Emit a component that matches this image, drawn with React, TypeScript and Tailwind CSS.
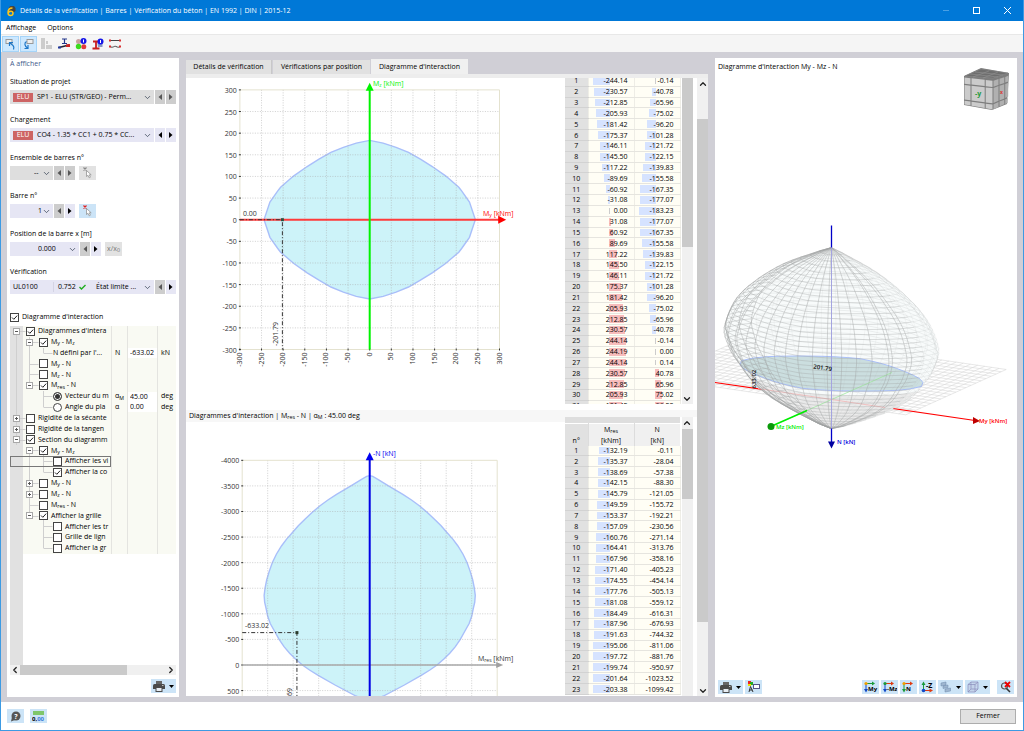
import React from 'react'
import { ChevronDown, ChevronLeft, ChevronRight, ChevronUp } from 'lucide-react'

const momentRows: [number, number][] = [
  [-244.14, -0.14], [-230.57, -40.78], [-212.85, -65.96], [-205.93, -75.02],
  [-181.42, -96.2], [-175.37, -101.28], [-146.11, -121.72], [-145.5, -122.15],
  [-117.22, -139.83], [-89.69, -155.58], [-60.92, -167.35], [-31.08, -177.07],
  [0, -183.23], [31.08, -177.07], [60.92, -167.35], [89.69, -155.58],
  [117.22, -139.83], [145.5, -122.15], [146.11, -121.72], [175.37, -101.28],
  [181.42, -96.2], [205.93, -75.02], [212.85, -65.96], [230.57, -40.78],
  [244.14, -0.14], [244.19, 0], [244.14, 0.14], [230.57, 40.78],
  [212.85, 65.96], [205.93, 75.02], [181.42, 96.2],
]

const axialRows: [number, number][] = [
  [-132.19, -0.11], [-135.37, -28.04], [-138.69, -57.38], [-142.15, -88.3],
  [-145.79, -121.05], [-149.59, -155.72], [-153.37, -192.21], [-157.09, -230.56],
  [-160.76, -271.14], [-164.41, -313.76], [-167.96, -358.16], [-171.4, -405.23],
  [-174.55, -454.14], [-177.76, -505.13], [-181.08, -559.12], [-184.49, -616.31],
  [-187.96, -676.93], [-191.63, -744.32], [-195.06, -811.06], [-197.72, -881.76],
  [-199.74, -950.97], [-201.64, -1023.52], [-203.38, -1099.42],
]

// right half of the Mres - N envelope, from the compression tip downwards
const envelope: [number, number][] = [
  [0, -3700], [6, -3685], [16, -3629], [36, -3505], [65, -3335], [82, -3225], [98, -3107],
  [113, -2980], [127, -2847], [140, -2720], [151, -2593], [163, -2460], [173, -2326],
  [183, -2165], [191, -2000], [197, -1830], [202, -1661], [205, -1510], [207, -1362],
  [206, -1230], [203, -1099], [200, -951], [195, -811], [184, -616], [178, -505],
  [168, -358], [157, -231], [146, -121], [132, 0], [118, 98], [101, 202], [68, 391],
  [27, 606], [0, 710],
]

const fullEnvelope = [...envelope, ...envelope.slice(1, -1).reverse().map(([m, n]) => [-m, n])]

const lowerHalf = momentRows.slice(0, 25)
const section = [...lowerHalf, ...lowerHalf.map(([a, b]) => [-a, -b])]

const M = ({ s }: { s: string }) => (
  <>M<sub>{s}</sub></>
)

const Chevron = ({ className = '' }) => (
  <ChevronDown size={9} strokeWidth={2} className={`pointer-events-none text-gray-700 ${className}`} />
)

const Stepper = ({ dir, off = false }: { dir: 'left' | 'right'; off?: boolean }) => (
  <button
    aria-label={dir === 'left' ? 'Précédent' : 'Suivant'}
    className={`w-[10px] h-[14px] shrink-0 flex items-center justify-center ${off ? 'bg-[#cdcdcd] text-[#555]' : 'bg-[#e6e6f4] text-black'}`}
  >
    <svg width="4" height="6" viewBox="0 0 4 6" fill="currentColor">
      {dir === 'left' ? <path d="M4 0 .5 3 4 6z" /> : <path d="M0 0 3.500 3 0 6z" />}
    </svg>
  </button>
)

const Check = ({ checked = false, label }: { checked?: boolean; label: string }) => (
  <span className="relative w-[9px] h-[9px] shrink-0">
    <input type="checkbox" aria-label={label} defaultChecked={checked} className="peer appearance-none block w-[9px] h-[9px] border border-[#444] bg-white" />
    <svg viewBox="0 0 9 9" className="hidden peer-checked:block absolute inset-0 pointer-events-none" fill="none" stroke="#222" strokeWidth="1">
      <path d="M2 4.5 3.8 6.3 7.2 2.6" />
    </svg>
  </span>
)

const Field = ({ id, label, children }: { id: string; label: string; children: React.ReactNode }) => (
  <div className="mb-[11px]">
    <label htmlFor={id} className="block leading-[10px] mb-[3px]">{label}</label>
    <div className="flex h-[14px] gap-px">{children}</div>
  </div>
)

const PickIcon = ({ color }: { color: string }) => (
  <svg width="12" height="12" viewBox="0 0 12 12" fill="none">
    <path d="M1.5 .5 4.5 3.500M4.5 .5 1.5 3.500" stroke={color} strokeWidth="1.200" />
    <path d="M4.5 3.500v6l1.500-1.200 1.200 2.500 1.200-.6-1.100-2.400h1.900z" fill="#fff" stroke="#888" strokeWidth=".7" />
  </svg>
)

const ElsBadge = () => (
  <span className="w-5 h-[9px] shrink-0 bg-[#cd6464] text-white flex items-center justify-center">ELU</span>
)

/* ---------- left panel ---------- */

type Node = {
  depth: number
  name: React.ReactNode
  label: string
  kind?: 'check' | 'radio' | 'text'
  on?: boolean
  open?: '+' | '-'
  symbol?: React.ReactNode
  value?: string
  unit?: string
  focus?: boolean
}

const tree: Node[] = [
  { depth: 0, name: "Diagrammes d'intera", label: "Diagrammes d'interaction", on: true, open: '-' },
  { depth: 1, name: <><M s="y" /> - <M s="z" /></>, label: 'My - Mz', on: true, open: '-' },
  { depth: 2, name: "N défini par l'...", label: 'N défini', kind: 'text', symbol: 'N', value: '-633.02', unit: 'kN' },
  { depth: 1, name: <><M s="y" /> - N</>, label: 'My - N' },
  { depth: 1, name: <><M s="z" /> - N</>, label: 'Mz - N' },
  { depth: 1, name: <><M s="res" /> - N</>, label: 'Mres - N', on: true, open: '-' },
  { depth: 2, name: 'Vecteur du m', label: 'Vecteur du moment', kind: 'radio', on: true, symbol: <>α<sub>M</sub></>, value: '45.00', unit: 'deg' },
  { depth: 2, name: 'Angle du pla', label: 'Angle du plan', kind: 'radio', symbol: 'α', value: '0.00', unit: 'deg' },
  { depth: 0, name: 'Rigidité de la sécante', label: 'Rigidité de la sécante', open: '+' },
  { depth: 0, name: 'Rigidité de la tangen', label: 'Rigidité de la tangente', open: '+' },
  { depth: 0, name: 'Section du diagramm', label: 'Section du diagramme', on: true, open: '-' },
  { depth: 1, name: <><M s="y" /> - <M s="z" /></>, label: 'Section My - Mz', on: true, open: '-' },
  { depth: 2, name: 'Afficher les vi', label: 'Afficher les valeurs', focus: true },
  { depth: 2, name: 'Afficher la co', label: 'Afficher la courbe', on: true },
  { depth: 1, name: <><M s="y" /> - N</>, label: 'Section My - N', open: '+' },
  { depth: 1, name: <><M s="z" /> - N</>, label: 'Section Mz - N', open: '+' },
  { depth: 1, name: <><M s="res" /> - N</>, label: 'Section Mres - N' },
  { depth: 1, name: 'Afficher la grille', label: 'Afficher la grille', on: true, open: '-' },
  { depth: 2, name: 'Afficher les tr', label: 'Afficher les traits' },
  { depth: 2, name: 'Grille de lign', label: 'Grille de lignes' },
  { depth: 2, name: 'Afficher la gr', label: 'Afficher la graduation' },
]

const indent = ['pl-0', 'pl-[13px]', 'pl-[27px]']

const Tree = () => (
  <div className="relative grid auto-rows-fr h-[228px]">
    <svg viewBox="0 0 165 228" className="absolute left-0 top-0 w-[165px] h-[228px]" stroke="#cfcfcf" fill="none">
      <path d="M6.5 5V119M19.5 11V59M19.5 124V189M33.5 22V27M33.5 65V81M33.5 129V146M33.5 190V222" />
      {tree.map((n, i) => (
        <path key={i} d={`M${[6.5, 19.5, 33.5][n.depth]} ${Math.round(i * 10.86) + 5.5}h9`} />
      ))}
    </svg>
    {tree.map((n, i) => (
      <div key={i} className="relative grid grid-cols-[101px_16px_30px_18px] min-h-0">
        <div className={`flex items-center overflow-hidden whitespace-nowrap ${indent[n.depth]} ${n.focus ? 'outline outline-[#777] -outline-offset-1' : ''}`}>
          <span className="w-[13px] shrink-0 flex justify-center">
            {n.open && (
              <button aria-label={n.label} className="block">
                <svg width="7" height="7" viewBox="0 0 7 7" className="block">
                  <rect x=".5" y=".5" width="6" height="6" fill="#fff" stroke="#a8a8a8" />
                  <path d={n.open === '+' ? 'M2 3.500h3M3.500 2v3' : 'M2 3.500h3'} stroke="#555" />
                </svg>
              </button>
            )}
          </span>
          {n.kind === 'radio' ? (
            <input type="radio" name="plan" aria-label={n.label} defaultChecked={n.on} className="appearance-none w-[9px] h-[9px] ml-[3px] shrink-0 rounded-full border border-[#444] bg-white checked:bg-[#333] checked:shadow-[inset_0_0_0_1px_#fff]" />
          ) : n.kind !== 'text' ? (
            <span className="ml-[3px] flex"><Check checked={n.on} label={n.label} /></span>
          ) : null}
          <span className="ml-[3px]">{n.name}</span>
        </div>
        <div className="border-l border-[#e4e4e0] flex items-center pl-[3px] whitespace-nowrap">
          <span>{n.symbol}</span>
        </div>
        <div className="border-l border-[#e4e4e0] flex items-center min-w-0">
          {n.value && <input aria-label={n.label} defaultValue={n.value} className="w-full min-w-0 bg-white pl-[2px] leading-[10px]" />}
        </div>
        <div className="border-l border-[#e4e4e0] flex items-center pl-[3px]">{n.unit}</div>
      </div>
    ))}
  </div>
)

const PrintButton = () => (
  <button aria-label="Imprimer" className="w-[25px] h-[14px] bg-[#cce4f7] flex items-center justify-center gap-1">
    <svg width="12" height="11" viewBox="0 0 12 11">
      <path d="M3 0h6v3H3z" fill="#666" />
      <path d="M1.500 3h9Q12 3 12 4.500V8H0V4.500Q0 3 1.500 3z" fill="#4a4a4a" />
      <path d="M2.500 6h7v5h-7z" fill="#4a4a4a" />
      <path d="M3.500 7h5v3h-5z" fill="#e8eef4" />
      <path d="M9 4.500h1.500" stroke="#ddd" strokeWidth=".8" />
    </svg>
    <Caret />
  </button>
)

const Caret = () => (
  <svg width="5" height="3" viewBox="0 0 5 3"><path d="M0 0h5L2.500 3z" /></svg>
)

const LeftPanel = () => (
  <aside className="w-[172px] shrink-0 bg-white px-[3px] flex flex-col">
    <h2 className="text-[#3f5b8c] leading-[12px] mb-[7px]">À afficher</h2>

    <Field id="situation" label="Situation de projet">
      <div className="relative flex-1 flex items-center bg-[#dedede] pl-[3px] min-w-0">
        <ElsBadge />
        <select id="situation" className="appearance-none flex-1 min-w-0 pl-1">
          <option>SP1 - ELU (STR/GEO) - Perm...</option>
        </select>
        <Chevron className="absolute right-[2px]" />
      </div>
      <Stepper dir="left" off />
      <Stepper dir="right" off />
    </Field>

    <Field id="chargement" label="Chargement">
      <div className="relative flex-1 flex items-center bg-[#e6e6f4] pl-[3px] min-w-0">
        <ElsBadge />
        <select id="chargement" className="appearance-none flex-1 min-w-0 pl-1">
          <option>CO4 - 1.35 * CC1 + 0.75 * CC...</option>
        </select>
        <Chevron className="absolute right-[2px]" />
      </div>
      <Stepper dir="left" />
      <Stepper dir="right" />
    </Field>

    <Field id="ensemble" label="Ensemble de barres n°">
      <div className="relative w-[43px] flex items-center bg-[#dedede]">
        <select id="ensemble" className="appearance-none w-full h-full pl-6"><option>--</option></select>
        <Chevron className="absolute right-[2px]" />
      </div>
      <Stepper dir="left" off />
      <Stepper dir="right" off />
      <button aria-label="Sélectionner un ensemble" className="ml-[3px] w-[17px] bg-[#e2e2e2] flex items-center justify-center"><PickIcon color="#888" /></button>
    </Field>

    <Field id="barre" label="Barre n°">
      <div className="relative w-[43px] flex items-center bg-[#e6e6f4]">
        <select id="barre" className="appearance-none w-full h-full pl-7"><option>1</option></select>
        <Chevron className="absolute right-[2px]" />
      </div>
      <Stepper dir="left" off />
      <Stepper dir="right" />
      <button aria-label="Sélectionner une barre" className="ml-[3px] w-[17px] bg-[#cce4f7] flex items-center justify-center"><PickIcon color="#e02020" /></button>
    </Field>

    <Field id="position" label="Position de la barre x [m]">
      <div className="relative w-[69px] flex items-center bg-[#e6e6f4]">
        <select id="position" className="appearance-none w-full h-full pl-7"><option>0.000</option></select>
        <Chevron className="absolute right-[2px]" />
      </div>
      <Stepper dir="left" off />
      <Stepper dir="right" />
      <button className="ml-[3px] w-[17px] bg-[#e2e2e2] text-[#777] flex items-center justify-center"><span>x/x<sub>0</sub></span></button>
    </Field>

    <Field id="verification" label="Vérification">
      <div className="relative flex-1 flex items-center bg-[#e6e6f4] pl-[3px] min-w-0">
        <span className="w-[40px] shrink-0">UL0100</span>
        <span className="w-[43px] shrink-0 border-l border-[#d4d4e4] pl-1 flex items-center gap-[3px]">
          0.752
          <svg width="7" height="6" viewBox="0 0 7 6" fill="none" stroke="#1fae1f" strokeWidth="1.4"><path d="M.5 3 2.5 5 6.5 1" /></svg>
        </span>
        <select id="verification" className="appearance-none flex-1 min-w-0">
          <option>État limite ...</option>
        </select>
        <Chevron className="absolute right-[2px]" />
      </div>
      <Stepper dir="left" off />
      <Stepper dir="right" />
    </Field>

    <div className="mt-[7px] flex items-center gap-[3px] h-[11px] mb-[3px]">
      <Check checked label="Diagramme d'interaction" />
      Diagramme d'interaction
    </div>

    <div className="flex-1 bg-[linear-gradient(90deg,#e1e1e1_13px,#fff_13px)]">
      <div className="bg-[linear-gradient(90deg,#e1e1e1_13px,#f9faf3_13px)]">
        <Tree />
      </div>
    </div>

    <div className="flex h-[10px] items-center bg-[#f0f0f0] text-[#222]">
      <ChevronLeft size={10} strokeWidth={3} />
      <div className="w-[107px] h-full bg-[#cacaca]" />
      <ChevronRight size={10} strokeWidth={3} className="ml-auto" />
    </div>
    <div className="flex justify-end py-1">
      <PrintButton />
    </div>
  </aside>
)

/* ---------- charts ---------- */

const dashDot = '4 2 1 2'

const MomentChart = () => {
  const k = 0.4327
  const x = (v: number) => 183.7 + v * k
  const y = (v: number) => 141.7 - v * k
  const ticks = Array.from({ length: 13 }, (_, i) => i * 50 - 300)
  return (
    <svg width="376" height="332" viewBox="0 0 376 332" className="text-[7px]" fill="#333">
      <polygon points={section.map(([a, b]) => `${x(a)},${y(b)}`).join(' ')} fill="#cdf3f9" stroke="#a9bffa" strokeWidth="1.4" />
      {ticks.map(t => (
        <g key={t}>
          <path d={`M${x(t)} ${y(300)}V${y(-300)}M${x(-300)} ${y(t)}H${x(300)}`} stroke={Math.abs(t) === 300 ? '#e4e2cf' : '#aaa'} strokeOpacity={Math.abs(t) === 300 ? 1 : 0.55} strokeDasharray={Math.abs(t) === 300 ? undefined : '1 1.5'} strokeWidth="1" />
          <path d={`M${x(-300) - 1} ${y(t)}h2M${x(t)} ${y(-300) - 1}v2`} stroke="#333" strokeWidth="1" />
          <text x={x(-300) - 3} y={y(t) + 3} textAnchor="end">{t}</text>
          <text transform={`translate(${x(t) + 2} ${y(-300) + 3}) rotate(-90)`} textAnchor="end">{t}</text>
        </g>
      ))}
      <path d={`M${x(-300)} ${y(0)}H${x(305)}`} stroke="#ff3b3b" strokeWidth="2" />
      <path d={`M${x(297)} ${y(0) - 4}l8 4-8 4z`} fill="#f00" />
      <path d={`M${x(0)} ${y(-300)}V${y(305)}`} stroke="#00f400" strokeWidth="2" />
      <path d={`M${x(0) - 4} ${y(298)}l4-8 4 8z`} fill="#00f400" />
      <path d={`M${x(-300)} ${y(0)}H${x(-201.79)}V${y(-300)}`} fill="none" stroke="#333" strokeDasharray={dashDot} />
      <rect x={x(-201.79) - 1.5} y={y(0) - 1.5} width="3" height="3" fill="#2b5040" />
      <text x="57" y="138">0.00</text>
      <text transform="translate(92 268) rotate(-90)">-201.79</text>
      <text x="187" y="8" fill="#00f400">M<tspan fontSize="5" dy="1">z</tspan><tspan dy="-1"> [kNm]</tspan></text>
      <text x="297" y="138" fill="#f00">M<tspan fontSize="5" dy="1">y</tspan><tspan dy="-1"> [kNm]</tspan></text>
    </svg>
  )
}

const AxialChart = () => {
  const x = (v: number) => 183.7 + v * 0.51
  const y = (v: number) => 243 + v * 0.05117
  const cols = Array.from({ length: 11 }, (_, i) => i * 50 - 250)
  const rows = Array.from({ length: 10 }, (_, i) => i * 500 - 4000)
  return (
    <svg width="376" height="274" viewBox="0 0 376 274" className="text-[7px]" fill="#333">
      <polygon points={fullEnvelope.map(([m, n]) => `${x(m)},${y(n)}`).join(' ')} fill="#cdf3f9" stroke="#a9bffa" strokeWidth="1.4" />
      {cols.map(t => (
        <path key={t} d={`M${x(t)} ${y(-4000)}V274`} stroke={Math.abs(t) === 250 ? '#e4e2cf' : '#aaa'} strokeOpacity={Math.abs(t) === 250 ? 1 : 0.55} strokeDasharray={Math.abs(t) === 250 ? undefined : '1 1.5'} />
      ))}
      {rows.map(t => (
        <g key={t}>
          <path d={`M${x(-250)} ${y(t)}H${x(250)}`} stroke={t === -4000 ? '#e4e2cf' : '#aaa'} strokeOpacity={t === -4000 ? 1 : 0.55} strokeDasharray={t === -4000 ? undefined : '1 1.5'} />
          <path d={`M${x(-250) - 1} ${y(t)}h2`} stroke="#333" />
          <text x={x(-250) - 3} y={y(t) + 3} textAnchor="end">{t}</text>
        </g>
      ))}
      <path d={`M${x(-250)} ${y(0)}H${x(255)}`} stroke="#a9a9a9" strokeWidth="1.5" />
      <path d={`M${x(248)} ${y(0) - 3}l7 3-7 3z`} fill="#a0a0a0" />
      <path d={`M${x(0)} 274V${y(-4050)}`} stroke="#0000e6" strokeWidth="2" />
      <path d={`M${x(0) - 4} ${y(-4000)}l4-8 4 8z`} fill="#0000f0" />
      <path d={`M${x(-250)} ${y(-633)}H${x(-142.7)}V274`} fill="none" stroke="#333" strokeDasharray={dashDot} />
      <rect x={x(-142.7) - 1.5} y={y(-633) - 1.5} width="3" height="3" fill="#2b3b2b" />
      <text x="59" y="206">-633.02</text>
      <text transform="translate(106 266) rotate(-90)" textAnchor="end">-142.69</text>
      <text x="187" y="34" fill="#0000f0">-N [kN]</text>
      <text x="292" y="239">M<tspan fontSize="5" dy="1">res</tspan><tspan dy="-1"> [kNm]</tspan></text>
    </svg>
  )
}

/* ---------- tables ---------- */

const ValueCell = ({ value, scale }: { value: number; scale?: number }) => {
  const size = scale ? Math.round(Math.abs(value) * scale) : 0
  return (
    <td className="relative bg-[#fffef5] border border-y-[#e6e5df] border-x-[#eeede6] border-t-0 p-0 pr-[6px] text-right">
      {scale && <span className="absolute left-5 inset-y-[2px] w-px bg-[#ccc]" />}
      {size > 0 && (
        <span
          className={`absolute inset-y-px ${value < 0 ? 'bg-[#d6e3ff]' : 'bg-[#f7bcbc]'}`}
          style={{ left: value < 0 ? 21 - size : 20, width: size }}
        />
      )}
      <span className="relative">{value.toFixed(2)}</span>
    </td>
  )
}

const VScroll = ({ children }: { children: React.ReactNode }) => (
  <div className="w-[11px] shrink-0 bg-[#f0f0f0] flex flex-col items-center text-[#222]">{children}</div>
)

const Rows = ({ rows, scales }: { rows: [number, number][]; scales: [number, number?] }) => (
  <tbody>
    {rows.map(([a, b], i) => (
      <tr key={i}>
        <th scope="row" className="bg-[#e1e1e1] border-b border-[#d2d2d2] font-medium p-0">{i + 1}</th>
        <ValueCell value={a} scale={scales[0]} />
        <ValueCell value={b} scale={scales[1]} />
      </tr>
    ))}
  </tbody>
)

const Cols = () => (
  <colgroup>
    <col className="w-[23px]" />
    <col className="w-[46px]" />
    <col className="w-[46px]" />
  </colgroup>
)

const Middle = () => (
  <main className="flex-1 min-w-0 flex flex-col pb-px">
    <nav className="flex items-end h-4 pt-px gap-px whitespace-nowrap">
      <button className="h-[14px] w-[86px] pt-px bg-[#e1e1e1] border-r border-[#c8c8c8]">Détails de vérification</button>
      <button className="h-[14px] w-[97px] pt-px bg-[#e1e1e1]">Vérifications par position</button>
      <button className="h-[15px] w-[97px] pt-px bg-[#f0f0f0]">Diagramme d'interaction</button>
    </nav>
    <div className="h-1 shrink-0 bg-[#ededed]" />
    <div className="flex-1 min-h-0 flex bg-white">
      <div className="flex-1 min-w-0 flex flex-col">
        <section className="flex h-[332px] shrink-0">
          <div className="flex-1 min-w-0 overflow-hidden"><MomentChart /></div>
          <div className="w-[132px] h-[326px] flex overflow-hidden pr-[5px] gap-px">
            <table className="w-[115px] h-[336px] -mt-0.5 table-fixed border-collapse leading-[9px]">
              <Cols />
              <Rows rows={momentRows} scales={[0.07, 0.093]} />
            </table>
            <VScroll>
              <div className="w-full h-[169px] bg-[#cacaca]" />
              <ChevronDown size={10} strokeWidth={3} className="mt-auto" />
            </VScroll>
          </div>
        </section>
        <section className="flex flex-1 min-h-0 overflow-hidden">
          <div className="flex-1 min-w-0 overflow-hidden">
            <h3 className="h-[12px] bg-[#f7f7f7] leading-[12px] pl-[3px] font-medium">
              Diagrammes d'interaction | <M s="res" /> - N | α<sub>M</sub> : 45.00 deg
            </h3>
            <AxialChart />
          </div>
          <div className="w-[132px] flex flex-col">
            <div className="h-[7px] shrink-0 bg-[#f7f7f7]" />
            <div className="flex-1 min-h-0 flex overflow-hidden pr-[5px] gap-px">
              <table className="w-[115px] h-[278px] table-fixed border-collapse leading-[9px]">
                <Cols />
                <thead className="bg-[#f0f0f0]">
                  <tr className="h-[6px] bg-[#dedede] border-b border-white">
                    <td colSpan={3} className="p-0" />
                  </tr>
                  <tr className="h-[22px] leading-[11px]">
                    <th className="bg-[#e1e1e1] font-medium p-0 align-bottom">n°</th>
                    <th className="font-medium p-0 border-x border-[#dcdcdc]"><M s="res" /><br />[kNm]</th>
                    <th className="font-medium p-0">N<br />[kN]</th>
                  </tr>
                </thead>
                <Rows rows={axialRows} scales={[0.085]} />
              </table>
              <VScroll>
                <ChevronUp size={10} strokeWidth={3} className="my-px" />
                <div className="w-full h-[70px] bg-[#cacaca]" />
              </VScroll>
            </div>
          </div>
        </section>
      </div>
      <VScroll>
        <ChevronUp size={10} strokeWidth={3} className="mt-px" />
        <div className="mt-[30px] w-full h-[503px] bg-[#cacaca]" />
        <ChevronDown size={10} strokeWidth={3} className="mt-auto" />
      </VScroll>
    </div>
  </main>
)

/* ---------- 3D view ---------- */

const project = (my: number, mz: number, n: number): [number, number] => [
  116.5 + my * 0.365 - mz * 0.155,
  287 + my * 0.052 + mz * 0.08 + n * 0.041,
]

const radius = (n: number) => {
  const i = envelope.findIndex(p => p[1] >= n)
  if (i <= 0) return 0
  const [m0, n0] = envelope[i - 1]
  const [m1, n1] = envelope[i]
  const r = (m0 + ((m1 - m0) * (n - n0)) / (n1 - n0)) / 185
  return r * (1.01 + Math.min(0.06, Math.max(0, -n - 633) * 0.00007))
}

const ring = (n: number) => section.map(([a, b]) => project(a * radius(n), b * radius(n), n))

const toPath = (pts: [number, number][]) => 'M' + pts.map(p => `${p[0].toFixed(1)} ${p[1].toFixed(1)}`).join('L')

const SolidView = () => {
  const levels = Array.from({ length: 41 }, (_, i) => -3695 + i * 110)
  const rings = levels.map(n => ring(n))
  // the +Mz side faces the viewer
  const front = (i: number) => i >= 27 || i <= 2
  const plane = (a: number, b: number) => `${116.7 + a * 143 + b * 62} ${287 + a * 21 - b * 28}`
  return (
    <svg viewBox="0 0 302 564" className="w-full h-full block">
      <g stroke="#d9d9d9" strokeWidth=".6">
        {Array.from({ length: 36 }, (_, i) => -1.18 + i * 0.05).map(a => (
          <path key={a} d={`M${plane(a, -0.12)}L${plane(a, 1.5)}`} />
        ))}
        {Array.from({ length: 21 }, (_, i) => -0.12 + i * 0.081).map(b => (
          <path key={b} d={`M${plane(-1.18, b)}L${plane(0.57, b)}`} />
        ))}
      </g>
      <path d="M0 270 260 308" stroke="#f00" strokeWidth="1.2" />
      {[...rings].reverse().map((r, i) => (
        <path key={i} d={toPath(r) + 'Z'} fill={i < 11 ? '#ebebeb' : '#f8fbfb'} />
      ))}
      <g fill="none" stroke="#dde0e0" strokeWidth=".5">
        {rings.map((r, i) => <path key={i} d={toPath(r.filter((_, j) => !front(j)))} />)}
      </g>
      <path d={toPath(ring(-633)) + 'Z'} fill="#cbdedf" stroke="#a9bffa" />
      <path d="M54 315 177 260" stroke="#a0e8a0" strokeWidth=".8" />
      <path d="M43 276 170 295" stroke="#f3b5b5" strokeWidth=".8" />
      <g fill="none" stroke="#9fa2a2" strokeWidth=".6">
        {rings.map((r, i) => <path key={i} strokeOpacity=".6" d={toPath([...r.slice(26), ...r.slice(0, 3)])} />)}
        {section.map((_, j) => (
          j % 25 !== 6 && j % 25 !== 18 && (
            <path key={j} strokeOpacity={front(j) ? 0.7 : 0.15} d={toPath(rings.map(r => r[j]))} />
          )
        ))}
      </g>
      <path d="M116.5 135V316" stroke="#a4a4e0" />
      <path d="M116.5 113V135M116.5 316V330" stroke="#0000c8" strokeWidth="1.3" />
      <path d="M113 329h7l-3.500 7z" fill="#0000a0" />
      <path d="M58 313 92 298" stroke="#0e0" strokeWidth="1.4" />
      <circle cx="56" cy="314" r="3.500" fill="#0a9a0a" />
      <path d="M258 304.500v7l7-3z" fill="#c00000" />
      <g className="text-[6px] font-semibold">
        <text x="264" y="310" fill="#f00">My [kNm]</text>
        <text x="61" y="316" fill="#0e0">Mz [kNm]</text>
        <text x="122" y="331" fill="#0000e0">N [kN]</text>
        <text transform="translate(98 256) rotate(8)" fill="#111">201.79</text>
        <text transform="translate(41 276) rotate(-90)" fill="#111">633.02</text>
      </g>
    </svg>
  )
}

const ViewCube = () => (
  <svg width="45" height="44" viewBox="0 0 45 44" className="shrink-0">
    <path d="M0 8 17 0 45 5 43 36 28 42 0 37z" fill="#7d7d7d" />
    <path d="M1 8 17 1 44 5 29 10z" fill="#6e6e6e" stroke="#888" strokeWidth=".6" />
    <path d="M6 6 34 9M11 4 39 7M9 9 25 3M19 10 34 4" stroke="#999" strokeWidth=".5" />
    <g fill="#cbcbcb">
      <path d="M.5 9.500 6.500 10.200V16.500L.5 15.800zM7.500 10.300 20.700 11.800V18L7.500 16.600zM21.700 12 28.500 12.700V19L21.700 18.200z" />
      <path d="M.5 17 6.500 17.700V32.300L.5 31.500zM7.500 17.800 20.700 19.200V34.300L7.500 32.500zM21.700 19.400 28.500 20V35.200L21.700 34.400z" />
      <path d="M.5 32.800 6.500 33.600V37.500L.5 36.500zM7.500 33.800 20.700 35.500V40L7.500 37.800zM21.700 35.700 28.500 36.500V41.500L21.700 40.300z" />
    </g>
    <g fill="#b0b0b0">
      <path d="M29.500 12.700 34.500 11V16.900L29.500 18.800zM35.500 10.700 40.300 9.200V15L35.500 16.600zM41.200 8.900 44.300 7.800V13.500L41.200 14.600z" />
      <path d="M29.500 20 34.500 18.100V32.800L29.500 34.900zM35.500 17.800 40.300 16.200V30.400L35.500 32.400zM41.200 15.900 44.200 14.800V28.600L41.200 30z" />
      <path d="M29.500 36.200 34.500 34V38.900L29.500 41.200zM35.500 33.600 40.300 31.700V36.300L35.500 38.500zM41.200 31.300 43.700 30.200V34.900L41.200 36z" />
    </g>
    <text x="11" y="28" className="text-[7px] font-bold" fill="#1d9a3c">-y</text>
    <text x="36" y="26" className="text-[5px] font-bold" fill="#d33">x</text>
  </svg>
)

const AxisButton = ({ text, top, left, dot }: { text: string; top: string; left: string; dot: string }) => (
  <button aria-label={`Vue ${text}`} className="w-[17px] h-[14px] bg-[#cce4f7] flex items-center justify-center">
    <svg width="15" height="12" viewBox="0 0 15 12">
      <path d="M3 2.500h7" stroke={top} strokeWidth="1" />
      <path d="M9 .5 12 2.500 9 4.500z" fill={top} />
      <path d="M3 3v6" stroke={left} strokeWidth="1" />
      <path d="M1 8h4L3 11.500z" fill={left} />
      <circle cx="3" cy="2.500" r="1.600" fill={dot} />
      <text x="5" y="10" className="text-[6px] font-bold">{text}</text>
    </svg>
  </button>
)

const RightPanel = () => (
  <section className="w-[302px] shrink-0 bg-white flex flex-col">
    <div className="flex justify-between items-start pl-[3px] pr-2 h-[54px]">
      <h2 className="pt-[3px] leading-[12px]">Diagramme d'interaction My - Mz - N</h2>
      <div className="pt-[10px]"><ViewCube /></div>
    </div>
    <div className="flex-1 min-h-0"><SolidView /></div>
    <div className="flex items-center gap-[2px] px-[3px] h-[14px] mt-[3px] mb-[3px]">
      <PrintButton />
      <button aria-label="Exporter" className="w-[17px] h-[14px] bg-[#cce4f7] flex items-center justify-center">
        <svg width="13" height="12" viewBox="0 0 13 12" fill="none">
          <rect x="1" y="0" width="3" height="3" fill="#e22" /><rect x="3" y="1" width="3" height="3" fill="#2a2" />
          <rect x="1" y="3" width="3" height="2" fill="#ed0" />
          <path d="M2 11 3.500 5.500 6 11M2.500 9h3" stroke="#333" strokeWidth="1" />
          <rect x="6.500" y="3.500" width="6" height="4" fill="#fff" stroke="#558" />
        </svg>
      </button>
      <div className="ml-auto flex gap-[2px]">
        <AxisButton text="My" top="#1a9a3a" left="#1048c8" dot="#f0a000" />
        <AxisButton text="-Mz" top="#e03a10" left="#1048c8" dot="#1a9a3a" />
        <AxisButton text="N" top="#e03a10" left="#1a9a3a" dot="#f0a000" />
        <button aria-label="Vue -Z" className="w-[17px] h-[14px] bg-[#cce4f7] flex items-center justify-center">
          <svg width="13" height="12" viewBox="0 0 13 12">
            <path d="M2.500 9.500V3" stroke="#1a9a3a" />
            <path d="M.5 4 2.500.5 4.500 4z" fill="#1a9a3a" />
            <path d="M3 9.500h6" stroke="#e03a10" /><path d="M8.500 7.500 12 9.500 8.500 11.500z" fill="#e03a10" />
            <circle cx="2.500" cy="9.500" r="1.800" fill="#1048c8" />
            <text x="5" y="7" className="text-[7px] font-bold">-Z</text>
          </svg>
        </button>
        <button aria-label="Rendu" className="w-[25px] h-[14px] bg-[#cce4f7] flex items-center justify-center gap-1">
          <svg width="12" height="12" viewBox="0 0 12 12" fill="#9fb6d0" stroke="#6d89ab" strokeWidth=".5">
            <path d="M1 2 6 1v3L1 5zM3 5 8 4v2.500L3 7.500zM5 8 10.500 7v3L5 11z" />
          </svg>
          <Caret />
        </button>
        <button aria-label="Boîte" className="w-[25px] h-[14px] bg-[#cce4f7] flex items-center justify-center gap-1">
          <svg width="12" height="12" viewBox="0 0 12 12" fill="#c3d3ea" stroke="#8a8dba" strokeWidth=".7">
            <path d="M1 3.500 4 1h7v7L8 11H1zM1 3.500h7V11M8 3.500 11 1M4 1v7h7M4 8 1 11" />
          </svg>
          <Caret />
        </button>
        <button aria-label="Annuler le zoom" className="ml-[5px] w-[17px] h-[14px] bg-[#cce4f7] flex items-center justify-center">
          <svg width="12" height="12" viewBox="0 0 12 12" fill="none">
            <circle cx="4.500" cy="5" r="3" stroke="#555" strokeWidth="1.200" />
            <path d="M6.500 7.500 10 11" stroke="#333" strokeWidth="1.600" />
            <path d="M5 1 10 6M10 1 5 6" stroke="#e00" strokeWidth="1.800" />
          </svg>
        </button>
      </div>
    </div>
  </section>
)

/* ---------- window chrome ---------- */

const TitleBar = () => (
  <header className="h-[21px] shrink-0 bg-[#0078d7] text-white flex items-center">
    <svg width="10" height="12" viewBox="0 0 10 12" className="ml-[5px] mr-[4px]">
      <path d="M4 1h4l1.500 2v3L7 8 2 5z" fill="#444" />
      <path d="M6.500 3C3.500 3 2 5 2 7.500S3 10.500 4.500 10.500 7 9.500 7 8.200 6 6.300 4.800 6.300 2.500 7 2.500 8" fill="none" stroke="#ffc61a" strokeWidth="1.500" />
    </svg>
    <h1 className="pt-px">Détails de la vérification | Barres | Vérification du béton | EN 1992 | DIN | 2015-12</h1>
    <div className="ml-auto flex">
      <button aria-label="Réduire" className="w-[31px] flex justify-center items-center"><span className="w-[6px] h-px bg-[#4aa0e4]" /></button>
      <button aria-label="Agrandir" className="w-[31px] flex justify-center"><span className="w-[7px] h-[7px] border border-white" /></button>
      <button aria-label="Fermer la fenêtre" className="w-[31px] flex justify-center">
        <svg width="7" height="7" viewBox="0 0 7 7" stroke="#fff"><path d="M0 0 7 7M7 0 0 7" /></svg>
      </button>
    </div>
  </header>
)

const Toolbar = () => (
  <div className="h-[18px] shrink-0 bg-[#f5f5f5] border-t border-[#e8e8e8] flex items-center pl-px">
    <button aria-label="Lier" className="w-[17px] h-[16px] bg-[#cce8ff] border border-[#a6d4f8] flex items-center justify-center">
      <svg width="11" height="12" viewBox="0 0 11 12" fill="none">
        <rect x="1" y="1.500" width="6" height="4" fill="#eee" stroke="#999" />
        <path d="M5 5 8 7.500Q9.500 9 8.500 11.500" stroke="#1f78c8" strokeWidth="1.200" />
        <path d="M4.500 8V4.500H8" stroke="#1f78c8" strokeWidth="1.200" />
      </svg>
    </button>
    <button aria-label="Retour" className="w-[17px] h-[16px] ml-px bg-[#cce8ff] border border-[#a6d4f8] flex items-center justify-center">
      <svg width="11" height="12" viewBox="0 0 11 12" fill="none">
        <rect x="4" y="1.500" width="6" height="4" fill="#eee" stroke="#999" />
        <path d="M3.500 3.500C1 5 1.500 8 4.500 10M1.500 10.500H5V7" stroke="#1f78c8" strokeWidth="1.200" />
      </svg>
    </button>
    <div className="flex items-center gap-[5px] ml-[4px]">
      <button aria-label="Imprimer le rapport">
        <svg width="12" height="12" viewBox="0 0 12 12" fill="#ccc"><path d="M0 0h4v11H0zM5 3h2v3H5zM5 7h6v4H5z" /></svg>
      </button>
      <button aria-label="Section">
        <svg width="12" height="12" viewBox="0 0 12 12" fill="none">
          <path d="M4 1h5M6.500 1v4.500M4 5.500h5" stroke="#24378c" strokeWidth="1.200" />
          <path d="M1 9.500 11 7" stroke="#223" strokeWidth="1.500" />
          <path d="M8 6.500 12 6v3L8 9z" fill="#c22" /><path d="M0 8.500h3v2H0z" fill="#223a9c" />
        </svg>
      </button>
      <button aria-label="Matériaux">
        <svg width="12" height="12" viewBox="0 0 12 12">
          <circle cx="3.500" cy="3.500" r="2.500" fill="#c9a0a0" /><circle cx="8.500" cy="3" r="3" fill="#1616e8" />
          <circle cx="3.500" cy="8.500" r="2.700" fill="#3ddc1c" /><circle cx="8.800" cy="8.800" r="2.500" fill="#e03c3c" />
          <path d="M8.500 1.500v3" stroke="#fff" />
        </svg>
      </button>
      <button aria-label="Informations de section">
        <svg width="12" height="12" viewBox="0 0 12 12" fill="none">
          <path d="M5 3h5.500v6H6z" fill="#8898c8" />
          <path d="M1 3.500h6M4 4v6M.5 10.500h7" stroke="#c81e1e" strokeWidth="1.800" />
          <circle cx="8.500" cy="3.500" r="3" fill="#1616e8" />
          <path d="M8.500 2v3" stroke="#fff" />
        </svg>
      </button>
      <button aria-label="Armatures">
        <svg width="12" height="12" viewBox="0 0 12 12" fill="none">
          <path d="M1 2.500h10M1 8.500c3 2 4-1 6 0s3 1 4 0" stroke="#444" strokeWidth="1" />
          <path d="M0 1.500h2v2H0zM10 1.500h2v2h-2zM0 7.500h2v2H0zM10 7.500h2v2h-2z" fill="#d83030" />
        </svg>
      </button>
    </div>
  </div>
)

const App = () => {
  return (
    <div className="h-screen flex flex-col bg-white border-x border-b border-[#3c9ae3] text-[7px] font-medium text-black font-['Open_Sans','Noto_Sans',sans-serif] overflow-hidden">
      <TitleBar />
      <nav className="h-[13px] shrink-0 flex items-center gap-[11px] pl-[5px] pt-px">
        <button>Affichage</button>
        <button>Options</button>
      </nav>
      <Toolbar />

      <div className="flex-1 min-h-0 flex gap-[7px] px-[6px] pt-[6px] pb-[5px] bg-[#d0cfd6]">
        <LeftPanel />
        <Middle />
        <RightPanel />
      </div>

      <footer className="h-[28px] shrink-0 flex items-center pl-[6px] pr-[7px] gap-[6px]">
        <button aria-label="Aide" className="w-[17px] h-[14px] bg-[#cce4f7] flex items-center justify-center">
          <svg width="11" height="11" viewBox="0 0 11 11">
            <circle cx="6" cy="5" r="4.500" fill="#555" /><path d="M1 10.500 2 6l3 3z" fill="#555" />
            <text x="4.300" y="7.800" className="text-[7px] font-bold" fill="#fff">?</text>
          </svg>
        </button>
        <button aria-label="Décimales" className="w-[17px] h-[14px] bg-[#cce4f7] flex items-center justify-center">
          <svg width="13" height="12" viewBox="0 0 13 12">
            <path d="M1 1h11v4H1z" fill="#7fc66b" />
            <text x="0" y="11" className="text-[6px] font-bold">0,<tspan fill="#3a7bd8">00</tspan></text>
          </svg>
        </button>
        <button className="ml-auto w-[56px] h-[15px] bg-[#e1e1e1] border border-[#adadad]">Fermer</button>
      </footer>
    </div>
  )
}

export default App
